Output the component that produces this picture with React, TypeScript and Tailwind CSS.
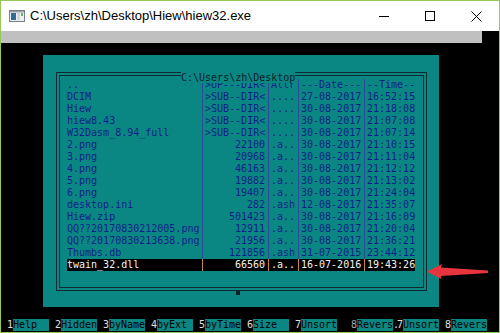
import React from "react";

type Row = { name: string; size: string; attr: string; date: string; time: string; sel?: boolean };

const rows: Row[] = [
  { name: "..", size: ">UP---DIR<", attr: "Attr", date: "---Date---", time: "--Time--" },
  { name: "DCIM", size: ">SUB--DIR<", attr: "....", date: "27-08-2017", time: "16:52:15" },
  { name: "Hiew", size: ">SUB--DIR<", attr: "....", date: "30-08-2017", time: "21:18:08" },
  { name: "hiew8.43", size: ">SUB--DIR<", attr: "....", date: "30-08-2017", time: "21:07:08" },
  { name: "W32Dasm_8.94_full", size: ">SUB--DIR<", attr: "....", date: "30-08-2017", time: "21:07:14" },
  { name: "2.png", size: "22100", attr: ".a..", date: "30-08-2017", time: "21:10:15" },
  { name: "3.png", size: "20968", attr: ".a..", date: "30-08-2017", time: "21:11:04" },
  { name: "4.png", size: "46163", attr: ".a..", date: "30-08-2017", time: "21:12:12" },
  { name: "5.png", size: "19882", attr: ".a..", date: "30-08-2017", time: "21:13:02" },
  { name: "6.png", size: "19407", attr: ".a..", date: "30-08-2017", time: "21:24:04" },
  { name: "desktop.ini", size: "282", attr: ".ash", date: "12-08-2017", time: "21:35:07" },
  { name: "Hiew.zip", size: "501423", attr: ".a..", date: "30-08-2017", time: "21:16:09" },
  { name: "QQ??20170830212005.png", size: "12911", attr: ".a..", date: "30-08-2017", time: "21:20:04" },
  { name: "QQ??20170830213638.png", size: "21956", attr: ".a..", date: "30-08-2017", time: "21:36:21" },
  { name: "Thumbs.db", size: "121856", attr: ".ash", date: "31-07-2015", time: "23:44:12" },
  { name: "twain_32.dll", size: "66560", attr: ".a..", date: "16-07-2016", time: "19:43:26", sel: true },
];

const keys = [
  { n: "1", l: "Help  " },
  { n: "2", l: "Hidden" },
  { n: "3", l: "byName" },
  { n: "4", l: "byExt " },
  { n: "5", l: "byTime" },
  { n: "6", l: "Size  " },
  { n: "7", l: "Unsort" },
];

function Sep({ sel }: { sel?: boolean }) {
  return (
    <div className="w-[6px] h-full flex justify-center shrink-0">
      <div className={sel ? "w-px h-full bg-[#c98a3c]" : "w-px h-full bg-[#2a4c96]"} />
    </div>
  );
}

function FileRow({ r }: { r: Row }) {
  return (
    <div
      className={
        r.sel
          ? "flex h-[12px] leading-[12px] w-[348px] bg-black text-[#f4f4f4]"
          : "flex h-[12px] leading-[12px] w-[348px] text-[#0e1f88]"
      }
    >
      <div className="w-[132px] shrink-0 whitespace-pre">{r.name}</div>
      <Sep sel={r.sel} />
      <div className="w-[60px] shrink-0 whitespace-pre text-right">{r.size}</div>
      <Sep sel={r.sel} />
      <div className="w-[24px] shrink-0 whitespace-pre">{r.attr}</div>
      <Sep sel={r.sel} />
      <div className="w-[60px] shrink-0 whitespace-pre">{r.date}</div>
      <Sep sel={r.sel} />
      <div className="w-[48px] shrink-0 whitespace-pre">{r.time}</div>
    </div>
  );
}

function Key({ n, l }: { n: string; l: string }) {
  return (
    <>
      <div className="w-[6px] shrink-0 bg-black text-[#e0e0e0]">{n}</div>
      <div className="w-[36px] shrink-0 bg-[#0a8782] text-black whitespace-pre">{l}</div>
    </>
  );
}

export default function App() {
  return (
    <div className="relative w-[500px] h-[333px] overflow-hidden bg-black border border-[#96c85a] flex flex-col">
      {/* Title bar */}
      <div className="h-[30px] shrink-0 bg-white flex items-center font-['Liberation_Sans',Arial,sans-serif] text-[13px] text-black">
        <div className="pl-[8px] flex items-center">
          <svg width="16" height="12" viewBox="0 0 16 12">
            <rect x="0.5" y="0.5" width="15" height="11" fill="#eef0f2" stroke="#7b7f84" />
            <rect x="1" y="1" width="14" height="1.5" fill="#9aa3ab" />
            <rect x="2" y="3" width="5" height="7" fill="#2f6f93" />
            <rect x="8" y="3" width="3" height="7" fill="#cfd8df" />
            <rect x="12" y="3" width="2" height="3" fill="#6aa878" />
          </svg>
        </div>
        <div className="ml-[5px] whitespace-pre">C:\Users\zh\Desktop\Hiew\hiew32.exe</div>
        <div className="ml-auto flex h-full">
          <div className="w-[46px] h-full flex items-center justify-center">
            <div className="w-[10px] h-px bg-black" />
          </div>
          <div className="w-[46px] h-full flex items-center justify-center">
            <div className="w-[10px] h-[10px] border border-black" />
          </div>
          <div className="w-[46px] h-full flex items-center justify-center">
            <svg width="11" height="11" viewBox="0 0 11 11">
              <path d="M0.5 0.5 L10.5 10.5 M10.5 0.5 L0.5 10.5" stroke="#000" strokeWidth="1" />
            </svg>
          </div>
        </div>
      </div>

      {/* Console */}
      <div className="flex-1 flex flex-col font-['DejaVu_Sans_Mono','Liberation_Mono',monospace] text-[10px] leading-[12px]">
        <div className="w-[481px] h-[12px] bg-[#c0c0c0] shrink-0" />
        <div className="h-[12px] shrink-0" />

        {/* Teal panel */}
        <div className="ml-[42px] w-[396px] h-[252px] shrink-0 bg-[#0a8782] pt-[12px] pl-[12px]">
          <div className="relative w-[372px] h-[228px]">
            <div className="mt-[5px] ml-[1px] w-[371px] h-[219px] border border-[#0c2a30] p-[2px]">
              <div className="w-full h-full border border-[#0c2a30] pt-[3px] pl-[7px]">
                {rows.map((r, i) => (
                  <FileRow key={i} r={r} />
                ))}
              </div>
            </div>
            <div className="absolute left-[126px] top-0 h-[11px] leading-[11px] bg-[#0a8782] text-[#0c1e28] whitespace-pre">
              C:\Users\zh\Desktop
            </div>
            <div className="absolute left-[181px] top-[219px] w-[4px] h-[4px] bg-[#0c2228]" />
          </div>
        </div>

        <div className="h-[12px] shrink-0" />

        {/* Key bar */}
        <div className="h-[12px] shrink-0 flex pl-[6px]">
          {keys.map((k) => (
            <React.Fragment key={k.n}>
              <Key n={k.n} l={k.l} />
              <div className="w-[6px] shrink-0" />
            </React.Fragment>
          ))}
          <div className="w-[8px] shrink-0" />
          <div className="w-[6px] shrink-0 bg-black text-[#a8a8a8]">8</div>
          <div className="w-[36px] shrink-0 bg-[#0a8782] text-black whitespace-pre">Revers</div>
          <div className="w-[4px] shrink-0 bg-black text-[#e0e0e0] tracking-[-2px] overflow-hidden">.</div>
          <div className="w-[6px] shrink-0 bg-black text-[#e0e0e0]">7</div>
          <div className="w-[36px] shrink-0 bg-[#0a8782] text-black whitespace-pre">Unsort</div>
          <div className="w-[6px] shrink-0" />
          <div className="w-[6px] shrink-0 bg-black text-[#e0e0e0]">8</div>
          <div className="w-[36px] shrink-0 bg-[#0a8782] text-black whitespace-pre">Revers</div>
        </div>
      </div>

      {/* Red arrow annotation */}
      <svg
        className="absolute left-[-1px] top-[-1px] pointer-events-none"
        width="500"
        height="333"
        viewBox="0 0 500 333"
      >
        <polygon
          points="427,271.5 442,264 441,267.5 488,270.5 488,273 441,276 441,279"
          fill="#e8343c"
        />
      </svg>
    </div>
  );
}
